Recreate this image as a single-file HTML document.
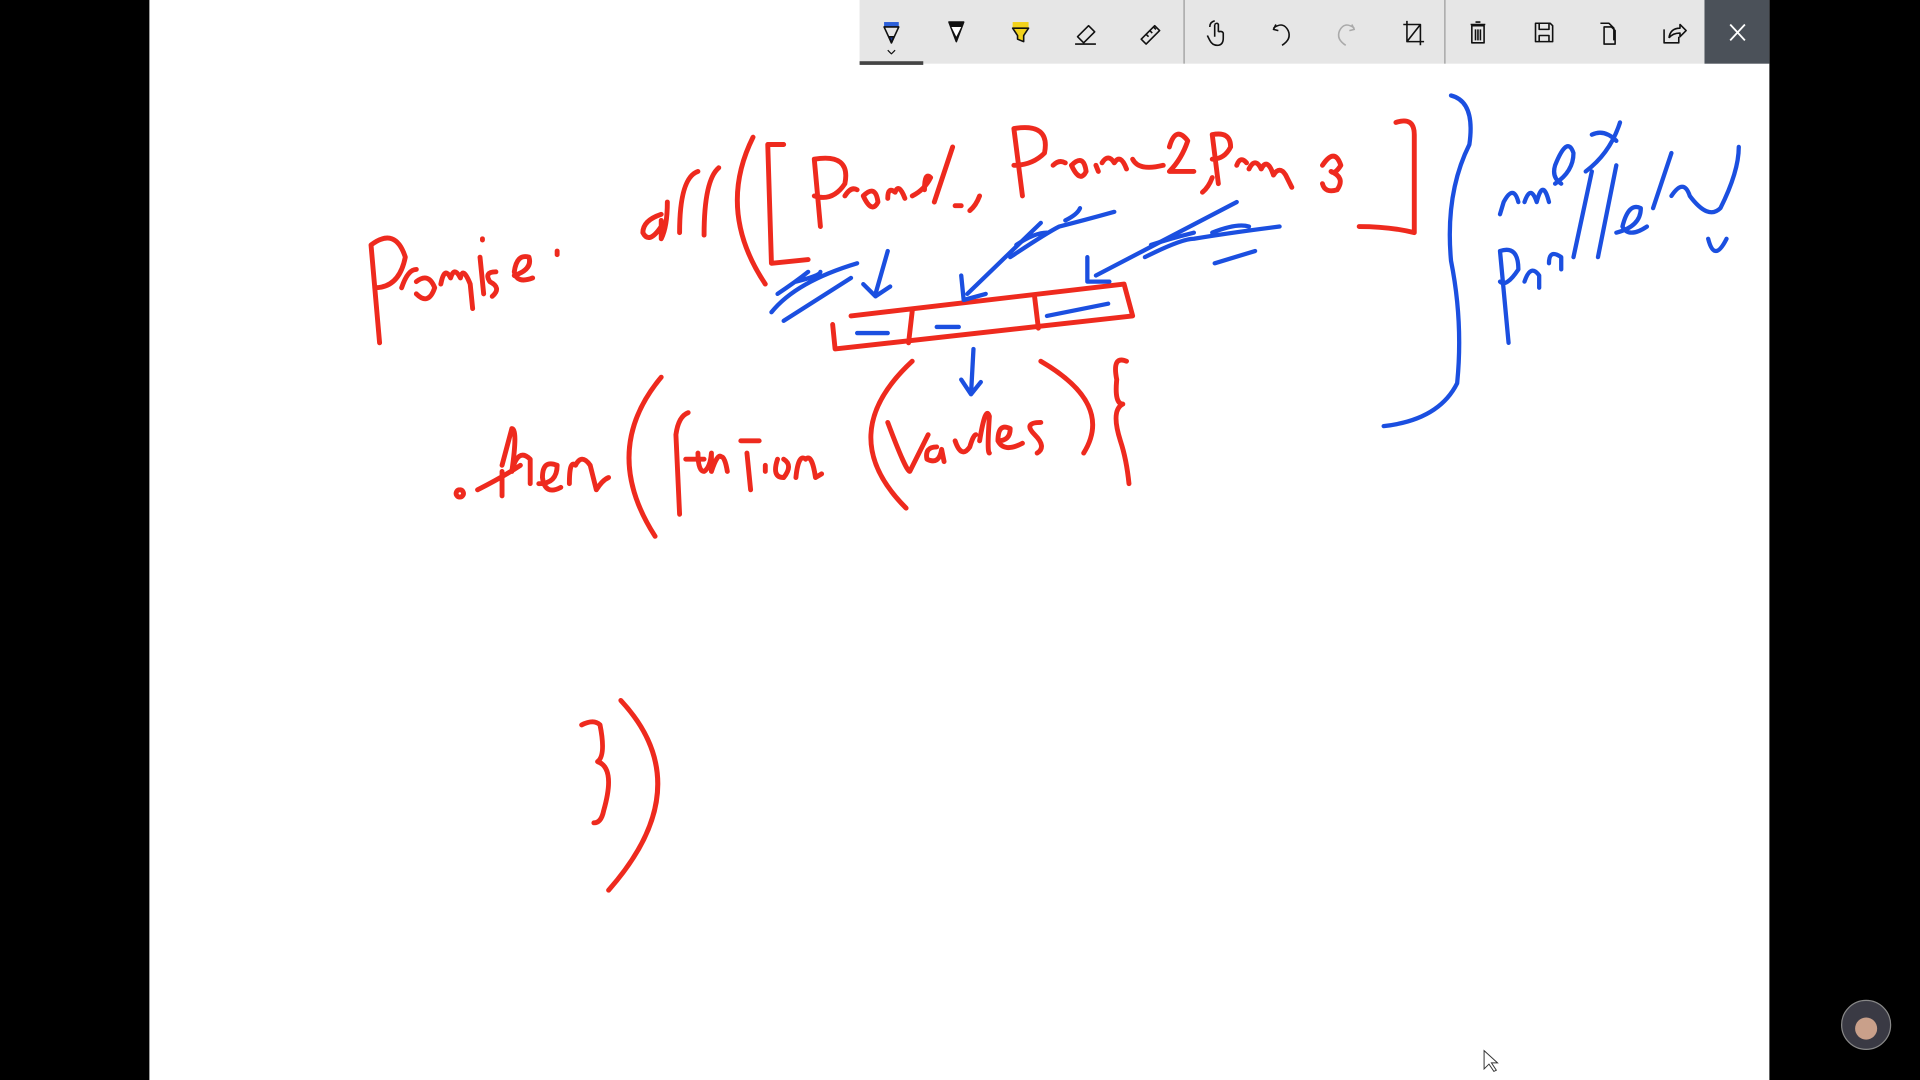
<!DOCTYPE html>
<html><head><meta charset="utf-8"><style>
html,body{margin:0;padding:0;background:#000;width:1920px;height:1080px;overflow:hidden}
svg{display:block}
</style></head><body>
<svg width="1920" height="1080" viewBox="0 0 1568 882" preserveAspectRatio="none" xmlns="http://www.w3.org/2000/svg">
<rect width="1568" height="882" fill="#000"/>
<rect x="122" y="0" width="1323" height="882" fill="#fff"/>
<!-- toolbar -->
<rect x="702" y="0" width="743" height="52" fill="#e6e6e6"/>
<rect x="1392" y="0" width="53" height="52" fill="#4b5159"/>
<line x1="967" y1="0" x2="967" y2="52" stroke="#999" stroke-width="1"/>
<line x1="1180" y1="0" x2="1180" y2="52" stroke="#999" stroke-width="1"/>
<rect x="702" y="50" width="52" height="3" fill="#444"/>
<g stroke="#111" stroke-width="1.3" fill="none" stroke-linejoin="round">
<!-- pen blue -->
<rect x="722" y="18" width="12" height="4" fill="#2b5fd9" stroke="none"/>
<path d="M722 22 L734 22 L728 35 Z"/><path d="M726 30 L728 35 L730 30Z" fill="#1a3a9a"/>
<path d="M725 41 L728 44 L731 41" stroke-width="1"/>
<!-- pencil black -->
<path d="M775 18 L787 18 L781 34 Z" fill="#111"/><path d="M777 22 L785 22 L781 30Z" fill="#fff" stroke="none"/>
<!-- highlighter -->
<rect x="827" y="18" width="13" height="5" fill="#f2d21b" stroke="none"/>
<path d="M827 23 L840 23 L836 29 L836 34 L831 32 L831 29 Z" fill="#f2d21b"/>
<!-- eraser -->
<path d="M880 30 L889 21 L894 26 L885 35 Z M878 36 L895 36"/>
<!-- ruler -->
<path d="M932 32 L943 21 L947 25 L936 36 Z M936 28 l2 2 M939 25 l2 2 M942 22 l2 2"/>
<!-- touch -->
<path d="M992 20 v10 M992 20 q2 -2 3 0 v6 M995 26 q3 -1 4 1 v4 q0 6 -5 6 q-4 0 -6 -4 l-2 -4 M988 22 q0 -4 4 -5"/>
<!-- undo -->
<path d="M1042 20 l-2 4 l4 1 M1040 23 q8 -6 12 2 q3 7 -5 12"/>
<!-- redo -->
<path d="M1104 20 l2 4 l-4 1 M1106 23 q-8 -6 -12 2 q-3 7 5 12" stroke="#aaa"/>
<!-- crop -->
<path d="M1149 17 v17 h14 M1146 20 h14 v17 M1149 34 l11 -14"/>
<!-- trash -->
<path d="M1201 20 h12 M1205 18 h4 M1202 21 h10 v14 h-10 Z M1205 24 v9 M1207 24 v9 M1209 24 v9"/>
<!-- save -->
<path d="M1254 19 h12 l2 2 v13 h-14 Z M1257 19 v5 h8 v-5 M1257 34 v-5 h8 v5"/>
<!-- copy -->
<path d="M1307 19 h7 l4 4 v10 M1310 22 h6 l3 3 v11 h-9 Z"/>
<!-- share -->
<path d="M1359 24 v11 h12 v-5 M1363 31 q1 -8 9 -8 v-3 l5 5 l-5 5 v-3 q-6 0 -9 4"/>
</g>
<path d="M1413 20 L1425 33 M1425 20 L1413 33" stroke="#fff" stroke-width="1.5"/>
<!-- red handwriting -->
<g stroke="#ee2a1e" stroke-width="4" fill="none" stroke-linecap="round" stroke-linejoin="round">
<!-- Promise.all -->
<path d="M310 280 L303 200 q20 -15 28 10 q-5 25 -25 25"/>
<path d="M328 235 q5 -15 12 -15 M340 230 q10 -8 15 5 q-5 15 -15 5 M360 232 q3 -15 8 -5 q3 -10 8 0 q2 -10 8 5 l2 20 M392 210 l3 30 M394 195 v1 M405 222 q-10 0 -5 8 q10 5 2 12 M420 225 q15 -5 12 -15 q-10 -3 -12 12 q2 10 15 5 M455 205 v3"/>
<path d="M540 175 q-15 5 -15 15 q5 10 15 -5 M540 180 v15 q5 -10 5 -30 M555 190 q0 -45 15 -50 M575 192 q0 -45 12 -55"/>
<path d="M615 112 q-30 60 10 120"/>
<path d="M640 118 L627 118 L630 215 L660 212"/>
<!-- Promise1, Promise2, Promise3 -->
<path d="M670 185 L665 130 q30 -5 25 20 q-10 15 -25 10 M690 160 q5 -8 10 -5 M705 160 q10 -10 12 5 q-5 10 -12 -5 M725 162 q0 -10 6 -5 q3 -8 8 5 M745 160 q10 -5 15 -15 q-5 -5 -5 10 M763 165 l15 -45 M780 168 h5"/>
<path d="M800 160 q-3 8 -8 12"/>
<path d="M835 160 L828 105 q30 -5 25 20 q-10 10 -25 10 M860 135 q5 -5 10 -2 M875 135 q10 -10 12 5 q-5 10 -12 -5 M895 135 l2 5 M900 133 q5 -8 10 0 q5 -8 10 5 M925 130 q5 10 25 5 M955 120 q5 -18 15 -5 q-5 15 -15 25 l20 0"/>
<path d="M990 145 q-3 8 -8 12 M995 150 L990 110 q15 -3 15 10 q-5 10 -15 10 M1010 135 q3 -8 8 -2 M1020 138 q5 -10 10 0 q5 -10 10 5 q5 -8 10 0 l5 10 M1080 135 q10 -15 15 0 q-5 8 -8 5 q12 5 5 15 q-10 3 -12 -5"/>
<path d="M1140 100 q15 -5 15 10 l0 80 q-20 -5 -45 -5"/>
<!-- array box -->
<path d="M695 258 L918 232 L925 258 L682 285 L680 265 M745 254 L742 280 M845 243 L848 268"/>
<!-- .then(function(values){ -->
<path d="M375 400 a3 3 0 1 0 1 0"/>
<path d="M390 400 q20 -10 35 -20 M410 385 v20 M410 380 l8 -30 q5 0 0 35 q5 -20 15 -10 v20 M440 395 q15 0 15 -15 q-12 -5 -12 10 q2 15 15 8 M465 395 q0 -20 5 -15 q5 -10 12 0 l5 20 q5 -8 10 -10"/>
<path d="M540 308 q-50 60 -5 130"/>
<path d="M555 420 L552 355 q2 -15 10 -18 M560 375 h15 M570 370 q0 15 5 15 q5 -3 6 -15 v15 q5 -15 8 -12 q3 0 5 12 M610 370 l3 30 M605 360 h15 M625 380 v5 M635 375 q-5 15 5 15 q8 -10 0 -15 M650 390 q2 -20 8 -15 q5 -5 8 15 l5 -3"/>
<path d="M745 295 q-65 60 -5 120"/>
<path d="M725 345 q15 40 18 40 q10 -20 15 -30 M765 365 q-10 0 -8 10 q10 5 12 -8 l2 10 M780 360 q5 15 12 5 q3 -10 5 -10 M800 360 q5 -30 8 -20 q-2 30 0 30 M815 360 q10 0 10 -10 q-10 -5 -10 10 q5 10 20 2 M850 345 q-15 0 -5 10 q10 10 2 15"/>
<path d="M850 295 q60 35 35 75"/>
<path d="M920 295 q-12 -5 -8 15 q-2 20 5 20 q-10 5 -2 30 q5 15 7 35"/>
<!-- closing }) -->
<path d="M475 592 q10 -5 15 0 q5 25 -2 30 q15 5 5 40 q-2 10 -8 10"/>
<path d="M507 572 q65 70 -10 155"/>
</g>
<!-- blue handwriting -->
<g stroke="#1b4fe0" stroke-width="3.5" fill="none" stroke-linecap="round" stroke-linejoin="round">
<path d="M630 255 q20 -25 70 -40 M640 262 l55 -35 M635 240 q15 -10 25 -18 M650 230 q20 -5 20 -8"/>
<path d="M725 205 L715 240 M705 232 l10 10 l12 -8"/>
<path d="M850 182 L790 240 M785 225 l2 20 l18 -5"/>
<path d="M825 210 q30 -20 40 -25 q20 -5 45 -12 M830 200 q15 -10 25 -10 M870 180 q10 -5 12 -10"/>
<path d="M1010 165 L895 225 M888 210 l0 20 l18 0"/>
<path d="M935 210 q30 -15 40 -15 q30 -5 70 -10 M940 200 q15 -5 35 -10 M990 190 q20 -8 30 -5 M992 215 l33 -10"/>
<path d="M700 272 h25 M765 267 h18 M855 258 q25 -5 50 -10"/>
<path d="M795 285 L793 322 M785 310 l8 12 l8 -10"/>
<path d="M1185 78 q20 5 15 40 q-20 40 -15 95 q10 50 5 100 q-15 30 -60 35"/>
<path d="M1225 175 l3 -10 q8 -15 12 0 M1245 165 q5 -15 10 0 q5 -20 10 0 M1270 150 q15 -10 15 -25 q-5 -15 -15 10 q-3 10 5 15 M1295 140 q20 -15 28 -40 M1300 110 q10 -5 20 5"/>
<path d="M1232 280 L1225 205 q15 -5 15 15 q-10 15 -15 10 M1245 230 q5 -15 12 -5 v10 M1265 215 q0 -12 10 -5 v10 M1285 210 l15 -70 M1305 210 l15 -75 M1320 190 q20 -5 20 -20 q-10 -5 -15 15 q5 10 20 0 M1350 170 l15 -45 M1365 160 q10 -15 15 0 q15 20 25 10 q15 -30 15 -50 M1410 195 q-10 20 -15 0"/>
</g>
<!-- avatar -->
<circle cx="1524" cy="837" r="20" fill="#3a3a44" stroke="#888"/>
<circle cx="1524" cy="840" r="9" fill="#c9a08a"/>
<path d="M1212 858 l0 15 l4 -4 l4 6 l2 -1 l-4 -6 l5 0 Z" fill="#fff" stroke="#333" stroke-width="0.8"/>
</svg>
</body></html>
